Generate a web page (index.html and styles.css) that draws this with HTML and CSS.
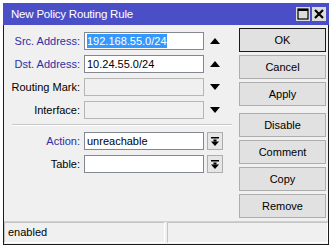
FILE: index.html
```html
<!DOCTYPE html>
<html lang="en">
<head>
    <meta charset="UTF-8">
    <title>New Policy Routing Rule</title>
    <link rel="stylesheet" href="styles.css">
</head>
<body>
    <div class="window">
        <div class="titlebar">
            <span class="title">New Policy Routing Rule</span>
            <div class="tb-buttons">
                <span class="tb-btn">
                    <svg width="12" height="12" viewBox="0 0 12 12"><rect x="1" y="1" width="10" height="10" fill="none" stroke="#000" stroke-width="1.2"/><rect x="1" y="1" width="10" height="2" fill="#000"/></svg>
                </span>
                <span class="tb-btn">
                    <svg width="12" height="12" viewBox="0 0 12 12"><path d="M2 2 L10 10 M10 2 L2 10" stroke="#000" stroke-width="2.2"/></svg>
                </span>
            </div>
        </div>

        <div class="content">
            <div class="form">
                <div class="row">
                    <label class="lbl link">Src. Address:</label>
                    <div class="field"><span class="sel">192.168.55.0/24</span></div>
                    <span class="ctl"><svg width="10" height="6" viewBox="0 0 10 6"><path d="M0 6 L5 0 L10 6 Z" fill="#000"/></svg></span>
                </div>
                <div class="row">
                    <label class="lbl link">Dst. Address:</label>
                    <div class="field">10.24.55.0/24</div>
                    <span class="ctl"><svg width="10" height="6" viewBox="0 0 10 6"><path d="M0 6 L5 0 L10 6 Z" fill="#000"/></svg></span>
                </div>
                <div class="row">
                    <label class="lbl">Routing Mark:</label>
                    <div class="field off"></div>
                    <span class="ctl"><svg width="10" height="6" viewBox="0 0 10 6"><path d="M0 0 L5 6 L10 0 Z" fill="#000"/></svg></span>
                </div>
                <div class="row">
                    <label class="lbl">Interface:</label>
                    <div class="field off"></div>
                    <span class="ctl"><svg width="10" height="6" viewBox="0 0 10 6"><path d="M0 0 L5 6 L10 0 Z" fill="#000"/></svg></span>
                </div>

                <div class="sep"></div>

                <div class="row">
                    <label class="lbl link">Action:</label>
                    <div class="field">unreachable</div>
                    <span class="drop"><svg width="8" height="9" viewBox="0 0 8 9"><rect x="0" y="0" width="8" height="1.5" fill="#000"/><rect x="2.5" y="2.5" width="3" height="2" fill="#000"/><path d="M0 4.5 L8 4.5 L4 9 Z" fill="#000"/></svg></span>
                </div>
                <div class="row">
                    <label class="lbl">Table:</label>
                    <div class="field"></div>
                    <span class="drop"><svg width="8" height="9" viewBox="0 0 8 9"><rect x="0" y="0" width="8" height="1.5" fill="#000"/><rect x="2.5" y="2.5" width="3" height="2" fill="#000"/><path d="M0 4.5 L8 4.5 L4 9 Z" fill="#000"/></svg></span>
                </div>
            </div>

            <div class="buttons">
                <button class="btn default">OK</button>
                <button class="btn">Cancel</button>
                <button class="btn">Apply</button>
                <button class="btn gap">Disable</button>
                <button class="btn">Comment</button>
                <button class="btn">Copy</button>
                <button class="btn">Remove</button>
            </div>
        </div>

        <div class="statusbar">
            <div class="cell left">enabled</div>
            <div class="cell right"></div>
        </div>
    </div>
</body>
</html>
```

FILE: styles.css
```css
body {
    margin: 0;
    background: #fff;
    font-family: "Liberation Sans", Arial, sans-serif;
    font-size: 11px;
    color: #000;
}

.window {
    margin: 3px 0 0 3px;
    width: 326px;
    height: 242px;
    box-sizing: border-box;
    border: 1px solid #1c1c1c;
    border-top: none;
    background: #f0f0f0;
    display: flex;
    flex-direction: column;
}

.titlebar {
    height: 22px;
    margin: 0 -1px;
    background: #4b4fc7;
    display: flex;
    align-items: center;
    padding-left: 8px;
    padding-right: 3px;
}

.title {
    color: #fff;
    font-size: 11.5px;
    letter-spacing: -0.2px;
    flex: 1;
}

.tb-buttons {
    display: flex;
    gap: 2px;
}

.tb-btn {
    width: 14px;
    height: 14px;
    background: #dcdcdc;
    display: flex;
    align-items: center;
    justify-content: center;
}

.content {
    flex: 1;
    display: flex;
}

.form {
    padding: 7px 0 0 4px;
    width: 218px;
}

.row {
    display: flex;
    align-items: center;
    height: 18px;
    margin-bottom: 5px;
}

.lbl {
    width: 72px;
    text-align: right;
    white-space: nowrap;
}

.lbl.link {
    color: #2b2fa6;
}

.field {
    margin-left: 4px;
    width: 120px;
    height: 18px;
    box-sizing: border-box;
    border: 1px solid #828790;
    background: #fff;
    padding: 0 2px;
    line-height: 16px;
    white-space: nowrap;
}

.field.off {
    background: #f0f0f0;
    border-color: #b5b5b5;
}

.sel {
    background: #3399ff;
    color: #fff;
    padding: 1px 0;
}

.ctl {
    width: 22px;
    display: flex;
    justify-content: center;
}

.drop {
    margin-left: 3px;
    width: 16px;
    height: 18px;
    box-sizing: border-box;
    border: 1px solid #adadad;
    background: #e6e6e6;
    display: flex;
    align-items: center;
    justify-content: center;
}

.sep {
    margin: 1px 0 6px 4px;
    width: 220px;
    border-top: 1px solid #c9c9c9;
    border-bottom: 1px solid #fff;
}

.buttons {
    margin-left: 13px;
    padding-top: 3px;
    display: flex;
    flex-direction: column;
    gap: 3px;
}

.btn {
    width: 87px;
    height: 24px;
    font-family: "Liberation Sans", Arial, sans-serif;
    font-size: 11px;
    background: #e1e1e1;
    border: 1px solid #adadad;
    padding: 0;
    color: #000;
}

.btn.default {
    border: 1px solid #1a1a1a;
}

.btn.gap {
    margin-top: 4px;
}

.statusbar {
    height: 22px;
    display: flex;
    gap: 2px;
    border-top: 1px solid #d0d0d0;
}

.cell {
    box-sizing: border-box;
    height: 21px;
    border: 1px solid #c4c4c4;
    border-right-color: #fff;
    border-bottom-color: #fff;
    padding-left: 3px;
    line-height: 19px;
}

.cell.left {
    width: 161px;
}

.cell.right {
    flex: 1;
}
```
